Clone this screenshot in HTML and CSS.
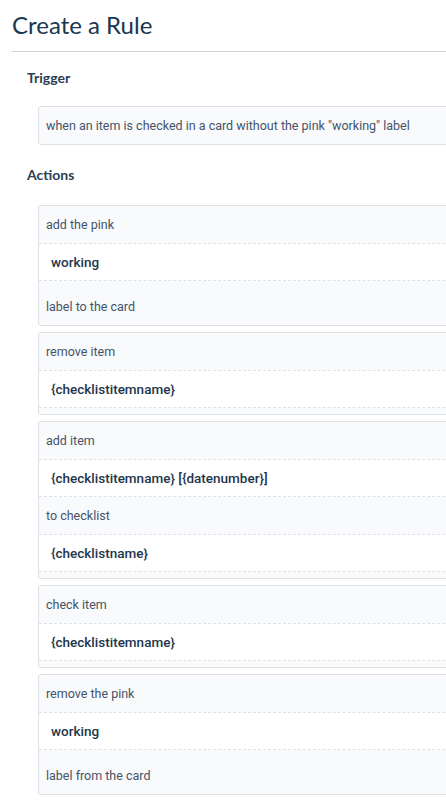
FILE: index.html
```html
<!DOCTYPE html>
<html>
<head>
<meta charset="utf-8">
<link rel="stylesheet" href="styles.css">
</head>
<body>
<div class="page">
  <header class="header"><h1 class="title">Create a Rule</h1></header>
  <section class="section">
    <h2 class="section-label">Trigger</h2>
    <div class="card card-trigger">
      <div class="row">when an item is checked in a card without the pink "working" label</div>
    </div>
  </section>
  <section class="section section-actions">
    <h2 class="section-label">Actions</h2>
    <div class="card card-open">
      <div class="row">add the pink</div>
      <div class="value">working</div>
      <div class="row row-tail">label to the card</div>
    </div>
    <div class="card">
      <div class="row">remove item</div>
      <div class="value">{checklistitemname}</div>
    </div>
    <div class="card">
      <div class="row">add item</div>
      <div class="value">{checklistitemname} [{datenumber}]</div>
      <div class="row">to checklist</div>
      <div class="value">{checklistname}</div>
    </div>
    <div class="card">
      <div class="row">check item</div>
      <div class="value">{checklistitemname}</div>
    </div>
    <div class="card card-open">
      <div class="row">remove the pink</div>
      <div class="value">working</div>
      <div class="row row-tail">label from the card</div>
    </div>
  </section>
</div>
</body>
</html>
```

FILE: styles.css
```css
html, body {
  margin: 0;
  padding: 0;
  background: #ffffff;
  overflow: hidden;
}

.page {
  width: 446px;
  overflow: hidden;
}

.header {
  margin-left: 12px;
  padding: 11px 0 12px;
  border-bottom: 1px solid #d0d3d6;
}

.title {
  margin: 0;
  font-family: Lato, "Liberation Sans", sans-serif;
  font-size: 24px;
  line-height: 28px;
  font-weight: 400;
  color: #1a3650;
}

.section {
  padding-left: 27px;
}

.section-label {
  margin: 16px 0 18px;
  font-family: Lato, "Liberation Sans", sans-serif;
  font-size: 14px;
  line-height: 20px;
  font-weight: 700;
  color: #2b4055;
}

.section-actions .section-label {
  margin-top: 20px;
  margin-bottom: 20px;
}

.card {
  margin: 0 -40px 5.5px 11px;
  background: #f9fafb;
  border: 1px solid #dfe1e6;
  border-radius: 3px;
  padding-bottom: 6.5px;
  font-family: Roboto, "Liberation Sans", sans-serif;
  font-size: 12.5px;
}

.card-trigger {
  padding-bottom: 0;
  margin-bottom: 0;
}

.card-open {
  padding-bottom: 0;
}

.row {
  padding: 0 7px;
  line-height: 37px;
  color: #44546a;
}

.row-tail {
  padding-top: 7px;
}

.value {
  padding: 0 12px;
  line-height: 36px;
  background: #ffffff;
  border-top: 1px dashed #dfe1e6;
  border-bottom: 1px dashed #dfe1e6;
  font-size: 13.5px;
  font-weight: 500;
  color: #22364c;
}
```
